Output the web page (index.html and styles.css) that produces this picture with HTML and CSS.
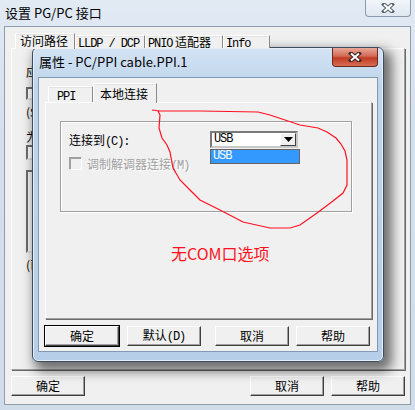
FILE: index.html
```html
<!DOCTYPE html>
<html lang="zh">
<head>
    <meta charset="UTF-8">
    <link rel="stylesheet" href="styles.css">
    <title>设置 PG/PC 接口</title>
</head>
<body>
    <div class="window main">
        <div class="titlebar">设置 PG/PC 接口</div>
        <div class="close-btn plain">
            <svg width="14" height="10" viewBox="0 0 14 10"><path d="M3 1.5 L11 8.5 M11 1.5 L3 8.5" stroke="#55606c" stroke-width="4" stroke-linecap="square"/><path d="M3 1.5 L11 8.5 M11 1.5 L3 8.5" stroke="#fff" stroke-width="2"/></svg>
        </div>
        <div class="client">
            <div class="tabs">
                <div class="tab active" style="width:60px">访问路径</div>
                <div class="tab" style="width:70px"><span class="a">LLDP / DCP</span></div>
                <div class="tab" style="width:78px"><span class="a">PNIO</span> 适配器</div>
                <div class="tab" style="width:47px"><span class="a">Info</span></div>
            </div>
            <div class="panel main-panel">
                <div class="bg-label first">应用程序访问点(A):</div>
                <div class="bg-box small"></div>
                <div class="bg-label">(STEP 7 的标准设置)</div>
                <div class="bg-label gap">为使用的接口分配参数(P):</div>
                <div class="bg-box mid"></div>
                <div class="bg-box list"></div>
                <div class="bg-label">(已分配参数的接口)</div>
            </div>
            <div class="buttons main-buttons">
                <button class="btn">确定</button>
                <span class="spacer"></span>
                <button class="btn">取消</button>
                <button class="btn">帮助</button>
            </div>
        </div>
    </div>

    <div class="window props">
        <div class="titlebar">属性 - PC/PPI cable.PPI.1</div>
        <div class="close-btn red">
            <svg width="14" height="10" viewBox="0 0 14 10"><path d="M3 1.5 L11 8.5 M11 1.5 L3 8.5" stroke="#3a2320" stroke-width="4" stroke-linecap="square"/><path d="M3 1.5 L11 8.5 M11 1.5 L3 8.5" stroke="#fff" stroke-width="2"/></svg>
        </div>
        <div class="client">
            <div class="tabs">
                <div class="tab" style="width:45px"><span class="a">PPI</span></div>
                <div class="tab active" style="width:64px">本地连接</div>
            </div>
            <div class="panel props-panel">
                <div class="group">
                    <div class="row">
                        <span class="field-label">连接到<span class="a">(C):</span></span>
                        <div class="combo">
                            <span class="combo-text a">USB</span>
                            <span class="combo-arrow"><svg width="9" height="5" viewBox="0 0 9 5"><path d="M0 0 H9 L4.5 5 Z" fill="#000"/></svg></span>
                            <div class="dropdown"><div class="option selected a">USB</div></div>
                        </div>
                    </div>
                    <div class="row check-row">
                        <span class="checkbox"></span>
                        <span class="check-label">调制解调器连接<span class="a">(M)</span></span>
                    </div>
                </div>
                <div class="note">无COM口选项</div>
            </div>
            <div class="buttons props-buttons">
                <button class="btn default">确定</button>
                <button class="btn">默认<span class="a">(D)</span></button>
                <button class="btn">取消</button>
                <button class="btn">帮助</button>
            </div>
        </div>
    </div>

    <svg class="scribble" width="415" height="410" viewBox="0 0 415 410">
        <path d="M152 110 L160 111 L200 111 L258 112 L270 115 L300 125 L318 128 L327 132 L336 138 L341 144 L345 151 L347 160 L347 185 L343 193 L333 201 L317 213 L300 225 L290 228 L270 228 L243 222 L220 210 L200 200 L190 190 L180 180 L173 168 L170 152 L167 145 L162 138 L159 128 L160 115 L158 111" fill="none" stroke="#ff1020" stroke-width="1.2"/>
    </svg>
</body>
</html>
```

FILE: styles.css
```css
* {
    box-sizing: border-box;
}

body {
    margin: 0;
    width: 415px;
    height: 410px;
    overflow: hidden;
    position: relative;
    background: #d7e2ee;
    font-family: "Noto Sans CJK SC", "Noto Sans", sans-serif;
    font-size: 12px;
    color: #000;
}

/* latin text in the old bitmap-font look */
.a {
    font-family: "Liberation Mono", monospace;
    font-size: 12px;
    letter-spacing: -1.1px;
}

.window {
    position: absolute;
}

.titlebar {
    font-size: 13px;
    white-space: nowrap;
}

/* outer dialog */
.main {
    left: 0;
    top: 0;
    width: 415px;
    height: 410px;
    background: linear-gradient(#e2eaf4, #d4e0ed 30%, #d0dcea);
}

.main .titlebar {
    height: 26px;
    padding: 4px 0 0 5px;
    line-height: 17px;
}

.main > .client {
    margin: 0 4px;
    height: 379px;
    background: #f0f0f0;
    border: 1px solid #8e9cac;
    padding: 6px 0 0 6px;
}

.close-btn {
    position: absolute;
    top: 0;
    width: 46px;
    display: flex;
    align-items: center;
    justify-content: center;
    border-radius: 0 0 4px 4px;
}

.close-btn.plain {
    left: 365px;
    height: 17px;
    border: 1px solid #8b99aa;
    border-top: none;
    background: linear-gradient(#f2f6fa, #dfe7f0);
}

.close-btn.red {
    left: 299px;
    top: 0;
    height: 19px;
    border: 1px solid #6a2a22;
    border-top: none;
    background: linear-gradient(#e9a898, #d26a55 45%, #c13b22 55%, #d76e52);
}

/* tabs */
.tabs {
    display: flex;
    align-items: flex-end;
    position: relative;
    z-index: 1;
}

.tab {
    height: 13px;
    background: #f0f0f0;
    border-top: 1px solid #fff;
    border-left: 1px solid #fff;
    border-right: 1px solid #8a8a8a;
    box-shadow: inset 0 1px 0 #e3e3e3;
    line-height: 12px;
    padding-left: 2px;
    white-space: nowrap;
}

.tab.active {
    margin-bottom: -1px;
}

.main .tabs {
    height: 15px;
    padding-left: 4px;
}

.main .tab.active {
    height: 16px;
    padding-left: 4px;
    line-height: 14px;
}

.panel {
    background: #f0f0f0;
    border-top: 1px solid #fff;
    border-left: 1px solid #fff;
    border-right: 1px solid #a0a0a0;
    border-bottom: 1px solid #a0a0a0;
    box-shadow: 1px 1px 0 #696969;
}

.main-panel {
    width: 394px;
    height: 322px;
    padding: 17px 0 0 14px;
    overflow: hidden;
}

.bg-label {
    height: 12px;
    line-height: 12px;
    margin-top: 6px;
    white-space: nowrap;
}

.bg-label.first {
    margin-top: 0;
}

.bg-label.gap {
    margin-top: 13px;
}

.bg-box {
    width: 320px;
    background: #fff;
    border: 2px solid #6c6c6c;
    border-right-color: #e0e0e0;
    border-bottom-color: #e0e0e0;
}

.bg-box.small {
    margin-top: 9px;
    height: 13px;
}

.bg-box.mid {
    margin-top: 2px;
    height: 15px;
}

.bg-box.list {
    margin-top: 10px;
    height: 83px;
    background: #f4f4f4;
}

.buttons {
    display: flex;
}

.btn {
    height: 20px;
    width: 74px;
    padding: 0;
    font-family: "Noto Sans CJK SC", sans-serif;
    font-size: 12px;
    line-height: 16px;
    color: #000;
    background: #f0f0f0;
    border: 1px solid;
    border-color: #fff #3f3f3f #3f3f3f #fff;
    box-shadow: inset -1px -1px 0 #a0a0a0;
}

.btn.default {
    outline: 1px solid #000;
    outline-offset: 0;
}

.main-buttons {
    width: 394px;
    margin-top: 6px;
    gap: 7px;
}

.spacer {
    flex: 1;
}

/* properties dialog */
.props {
    left: 32px;
    top: 47px;
    width: 352px;
    height: 315px;
    border: 1px solid #3b4c60;
    border-radius: 6px;
    background: linear-gradient(#d3e3f3, #bfd5ec 12%, #b6cee8);
    padding: 0 5px 9px;
    display: flex;
    flex-direction: column;
    box-shadow: 5px 6px 12px 3px rgba(0, 0, 0, 0.55), inset 0 0 0 1px #e6eff8;
}

.props .titlebar {
    height: 29px;
    padding-left: 1px;
    line-height: 28px;
}

.props > .client {
    flex: 1;
    background: #f0f0f0;
    border: 1px solid #8399b3;
    padding: 5px 0 0 6px;
}

.props .tabs {
    height: 19px;
    padding-left: 3px;
}

.props .tab {
    height: 16px;
    line-height: 15px;
    padding-left: 8px;
}

.props .tab.active {
    height: 20px;
    line-height: 19px;
    padding-left: 6px;
}

.props-panel {
    width: 327px;
    height: 217px;
    padding: 18px 0 0 14px;
}

.group {
    width: 292px;
    height: 91px;
    border: 1px solid #a0a0a0;
    box-shadow: inset 1px 1px 0 #fff, 1px 1px 0 #fff;
    padding: 9px 0 0 8px;
}

.row {
    display: flex;
    align-items: center;
    height: 17px;
}

.field-label {
    width: 141px;
}

.combo {
    position: relative;
    width: 88px;
    height: 17px;
    background: #fff;
    border: 2px solid #7a7a7a;
    border-right-color: #c8c8c8;
    border-bottom-color: #c8c8c8;
    display: flex;
    align-items: center;
}

.combo-text {
    flex: 1;
    padding-left: 2px;
    line-height: 13px;
}

.combo-arrow {
    width: 16px;
    height: 13px;
    background: #f0f0f0;
    border: 1px solid;
    border-color: #fff #404040 #404040 #fff;
    display: flex;
    align-items: center;
    justify-content: center;
}

.dropdown {
    position: absolute;
    left: -2px;
    top: 16px;
    width: 90px;
    border: 1px solid #646464;
    background: #fff;
    z-index: 2;
}

.option {
    height: 13px;
    line-height: 13px;
    padding-left: 2px;
}

.option.selected {
    background: #3399ff;
    color: #fff;
}

.check-row {
    margin-top: 9px;
    height: 13px;
}

.checkbox {
    width: 13px;
    height: 13px;
    border: 1px solid #a0a0a0;
    border-right-color: #fff;
    border-bottom-color: #fff;
    background: #f0f0f0;
    box-shadow: inset 1px 1px 0 #a0a0a0;
}

.check-label {
    margin-left: 5px;
    color: #a0a0a0;
    text-shadow: 1px 1px 0 #fff;
}

.note {
    margin-top: 31px;
    padding-left: 111px;
    font-size: 16px;
    line-height: 20px;
    color: #ff1020;
}

.props-buttons {
    margin-top: 7px;
}

.props-buttons .btn + .btn {
    margin-left: 8px;
}

.props-buttons .btn:nth-child(3) {
    margin-left: 14px;
}

.props-buttons .btn:nth-child(4) {
    margin-left: 7px;
}

.scribble {
    position: absolute;
    left: 0;
    top: 0;
    z-index: 10;
    pointer-events: none;
}
```
